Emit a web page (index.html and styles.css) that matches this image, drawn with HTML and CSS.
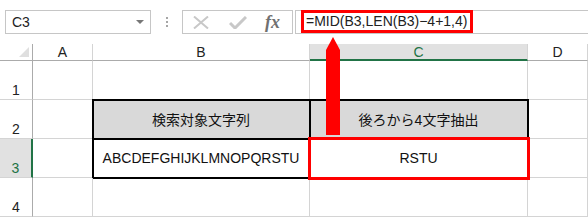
FILE: index.html
```html
<!DOCTYPE html>
<html lang="ja">
<head>
    <meta charset="UTF-8">
    <title>MID関数</title>
    <link rel="stylesheet" href="styles.css">
</head>
<body>
    <div class="topbar">
        <div class="namebox">
            <span>C3</span>
            <span class="drop"></span>
        </div>
        <div class="dots"><i></i><i></i><i></i></div>
        <div class="tools">
            <svg width="16" height="13" viewBox="0 0 16 13"><path d="M1 0.5 L15 12.5 M15 0.5 L1 12.5" stroke="#c8c8c8" stroke-width="2" fill="none"/></svg>
            <svg width="18" height="13" viewBox="0 0 18 13"><path d="M1 7 L6 12 L17 1" stroke="#c8c8c8" stroke-width="3" fill="none"/></svg>
            <span class="fx">fx</span>
        </div>
        <div class="formula">
            <span class="hl">=MID(B3,LEN(B3)&minus;4+1,4)</span>
        </div>
    </div>

    <div class="sheet">
        <div class="corner"><span class="tri"></span></div>
        <div class="colhead">A</div>
        <div class="colhead">B</div>
        <div class="colhead sel">C</div>
        <div class="colhead">D</div>

        <div class="rowhead">1</div>
        <div class="cell"></div>
        <div class="cell"></div>
        <div class="cell"></div>
        <div class="cell"></div>

        <div class="rowhead">2</div>
        <div class="cell"></div>
        <div class="cell tb head">検索対象文字列</div>
        <div class="cell tb head">後ろから4文字抽出</div>
        <div class="cell"></div>

        <div class="rowhead sel">3</div>
        <div class="cell"></div>
        <div class="cell tb">ABCDEFGHIJKLMNOPQRSTU</div>
        <div class="cell tb active">RSTU</div>
        <div class="cell"></div>

        <div class="rowhead">4</div>
        <div class="cell"></div>
        <div class="cell"></div>
        <div class="cell"></div>
        <div class="cell"></div>
    </div>

    <!-- 数式バーへの矢印 -->
    <svg class="arrow" width="14" height="98" viewBox="0 0 14 98">
        <path d="M7 0 L14 13 L14 98 L0 98 L0 13 Z" fill="#ff0000"/>
    </svg>
</body>
</html>
```

FILE: styles.css
```css
body {
    margin: 0;
    width: 588px;
    height: 218px;
    overflow: hidden;
    background: #fff;
    position: relative;
    font-family: "Liberation Sans", "Noto Sans CJK JP", sans-serif;
    color: #000;
}

/* 上部の名前ボックスと数式バー */
.topbar {
    display: flex;
    align-items: flex-start;
    height: 44px;
    padding-top: 10px;
    box-sizing: border-box;
}
.namebox {
    display: flex;
    align-items: center;
    justify-content: space-between;
    margin-left: 5px;
    width: 146px;
    height: 24px;
    border: 1px solid #c6c6c6;
    box-sizing: border-box;
    padding: 0 6px 0 6px;
    font-size: 14px;
    color: #222;
}
.drop {
    width: 0;
    height: 0;
    border-left: 4px solid transparent;
    border-right: 4px solid transparent;
    border-top: 4px solid #777;
}
.dots {
    width: 31px;
    height: 24px;
    display: flex;
    flex-direction: column;
    align-items: center;
    justify-content: center;
    gap: 2px;
}
.dots i {
    display: block;
    width: 2px;
    height: 2px;
    background: #a6a6a6;
}
.tools {
    display: flex;
    align-items: center;
    width: 111px;
    height: 24px;
    border: 1px solid #c6c6c6;
    box-sizing: border-box;
    padding-left: 10px;
    gap: 20px;
}
.fx {
    font-family: "Liberation Serif", serif;
    font-style: italic;
    font-weight: bold;
    font-size: 18px;
    color: #707070;
    margin-left: -2px;
}
.formula {
    flex: 1;
    height: 24px;
    margin-left: 2px;
    border: 1px solid #c6c6c6;
    border-right: 0;
    box-sizing: border-box;
    padding-left: 5px;
}
.hl {
    display: inline-block;
    height: 23px;
    margin-top: -1px;
    border: 3px solid #ff0000;
    box-sizing: border-box;
    padding: 0 3px 0 2px;
    font-size: 14px;
    line-height: 17px;
    color: #222;
}

/* シート */
.sheet {
    display: grid;
    grid-template-columns: 33px 60px 217px 218px 60px;
    grid-template-rows: 17px 39px 39px 39px 39px;
}
.corner {
    border-right: 1px solid #ababab;
    border-bottom: 1px solid #ababab;
    position: relative;
}
.tri {
    position: absolute;
    right: 3px;
    bottom: 3px;
    width: 0;
    height: 0;
    border-left: 10px solid transparent;
    border-bottom: 10px solid #dfdfdf;
}
.colhead {
    border-right: 1px solid #d4d4d4;
    border-bottom: 1px solid #ababab;
    text-align: center;
    font-size: 14px;
    line-height: 16px;
    color: #222;
}
.colhead.sel {
    background: #e1e1e1;
    color: #217346;
    border-bottom: 2px solid #217346;
}
.rowhead {
    border-right: 1px solid #ababab;
    border-bottom: 1px solid #d4d4d4;
    display: flex;
    align-items: flex-end;
    justify-content: center;
    font-size: 14px;
    line-height: 16px;
    padding-bottom: 1px;
    color: #222;
}
.rowhead.sel {
    background: #e1e1e1;
    color: #217346;
    border-right: 2px solid #217346;
}
.cell {
    border-right: 1px solid #d4d4d4;
    border-bottom: 1px solid #d4d4d4;
    display: flex;
    align-items: center;
    justify-content: center;
    font-size: 14px;
    color: #111;
}
.tb {
    outline: 2px solid #000;
    outline-offset: -1px;
}
.head {
    background: #d9d9d9;
}
.active {
    position: relative;
    outline: 3px solid #ff0000;
    outline-offset: -1px;
    z-index: 1;
}

.arrow {
    position: absolute;
    left: 326px;
    top: 37px;
}
```
